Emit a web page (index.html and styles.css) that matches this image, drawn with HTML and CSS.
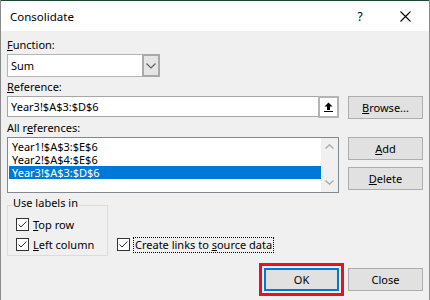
FILE: index.html
```html
<!DOCTYPE html>
<html lang="en">
	<head>
		<meta charset="UTF-8" />
		<title>Consolidate</title>
		<link rel="stylesheet" href="styles.css">
	</head>
	<body>
		<div class="window">
			<div class="titlebar">
				<span class="title">Consolidate</span>
				<span class="help">?</span>
				<span class="close-x">
					<svg width="11" height="11" viewBox="0 0 11 11"><path d="M0.5 0.5L10.5 10.5M10.5 0.5L0.5 10.5" stroke="#000" stroke-width="1.1" fill="none"/></svg>
				</span>
			</div>

			<div class="content">
				<div class="label"><u>F</u>unction:</div>
				<div class="combo">
					<span class="combo-value">Sum</span>
					<span class="combo-btn">
						<svg width="10" height="6" viewBox="0 0 10 6"><path d="M0.5 0.5L5 5L9.5 0.5" stroke="#606060" stroke-width="1.2" fill="none"/></svg>
					</span>
				</div>

				<div class="label label-gap"><u>R</u>eference:</div>
				<div class="grid-row">
					<div class="ref-input">
						<span class="ref-value">Year3!$A$3:$D$6</span>
						<span class="ref-btn">
							<svg width="9" height="10" viewBox="0 0 9 10"><path d="M4.5 0.5L0.5 4.5H3V8H6V4.5H8.5Z" fill="#000"/><rect x="0" y="9" width="9" height="1" fill="#000"/></svg>
						</span>
					</div>
					<button class="btn"><u>B</u>rowse...</button>
				</div>

				<div class="label label-gap2">All r<u>e</u>ferences:</div>
				<div class="grid-row">
					<div class="listbox">
						<ul class="list-items">
							<li>Year1!$A$3:$E$6</li>
							<li>Year2!$A$4:$E$6</li>
							<li class="selected">Year3!$A$3:$D$6</li>
						</ul>
						<div class="scrollbar">
							<svg width="9" height="5" viewBox="0 0 9 5"><path d="M0.5 4.5L4.5 0.8L8.5 4.5" stroke="#a8a8a8" stroke-width="1.3" fill="none"/></svg>
							<svg width="9" height="5" viewBox="0 0 9 5"><path d="M0.5 0.5L4.5 4.2L8.5 0.5" stroke="#a8a8a8" stroke-width="1.3" fill="none"/></svg>
						</div>
					</div>
					<div class="btn-stack">
						<button class="btn"><u>A</u>dd</button>
						<button class="btn"><u>D</u>elete</button>
					</div>
				</div>

				<div class="options-row">
					<fieldset class="group">
						<legend>Use labels in</legend>
						<div class="check-row">
							<span class="checkbox"><svg width="11" height="11" viewBox="0 0 11 11"><path d="M1.5 5.5L4 8L9.5 2.5" stroke="#333" stroke-width="1" fill="none"/></svg></span>
							<span><u>T</u>op row</span>
						</div>
						<div class="check-row">
							<span class="checkbox"><svg width="11" height="11" viewBox="0 0 11 11"><path d="M1.5 5.5L4 8L9.5 2.5" stroke="#333" stroke-width="1" fill="none"/></svg></span>
							<span><u>L</u>eft column</span>
						</div>
					</fieldset>
					<div class="check-row links-row">
						<span class="checkbox"><svg width="11" height="11" viewBox="0 0 11 11"><path d="M1.5 5.5L4 8L9.5 2.5" stroke="#333" stroke-width="1" fill="none"/></svg></span>
						<span class="focus-text">Create links to <u>s</u>ource data</span>
					</div>
				</div>

				<div class="footer">
					<button class="btn btn-default">OK</button>
					<button class="btn">Close</button>
				</div>
			</div>
		</div>
	</body>
</html>
```

FILE: styles.css
```css
* {
	box-sizing: border-box;
}
body {
	margin: 0;
	font-family: "Noto Sans", "Open Sans", sans-serif;
	font-size: 11px;
	color: #000;
}
.window {
	width: 430px;
	height: 300px;
	overflow: hidden;
	background-color: #f0f0f0;
	border-left: 1px solid #8a8a8a;
	border-right: 1px solid #8a8a8a;
}
.titlebar {
	height: 31px;
	margin: 0 -1px;
	background-color: #fff;
	border: 1px solid #1d4a2f;
	border-bottom: none;
	display: flex;
	align-items: center;
	padding-left: 9px;
}
.title {
	flex: 1;
	font-size: 11.5px;
}
.help {
	width: 46px;
	text-align: center;
	font-size: 12px;
}
.close-x {
	width: 46px;
	display: flex;
	justify-content: center;
	padding-right: 2px;
}
.content {
	padding: 7px 6px 0 6px;
}
.label {
	line-height: 14px;
	height: 14px;
}
.label-gap {
	margin-top: 3px;
}
.label-gap2 {
	margin-top: 2px;
}
.combo {
	margin-top: 2px;
	width: 153px;
	height: 23px;
	border: 1px solid #b4b4b4;
	background-color: #fff;
	display: flex;
}
.combo-value {
	flex: 1;
	padding-left: 3px;
	line-height: 21px;
}
.combo-btn {
	width: 18px;
	background-color: #e5e5e5;
	border: 2px solid #a9a9a9;
	margin: -1px -1px -1px 0;
	display: flex;
	align-items: center;
	justify-content: center;
}
.grid-row {
	margin-top: 2px;
	display: grid;
	grid-template-columns: 332px 75px;
	column-gap: 9px;
	align-items: start;
}
.ref-input {
	height: 21px;
	border: 1px solid #a6a6a6;
	background-color: #fff;
	display: flex;
}
.ref-value {
	flex: 1;
	padding-left: 3px;
	line-height: 19px;
}
.ref-btn {
	width: 21px;
	margin: -1px -1px -2px 0;
	border: 2px solid #b4b4b4;
	background-color: #fff;
	display: flex;
	align-items: center;
	justify-content: center;
}
.btn {
	display: block;
	width: 75px;
	height: 23px;
	padding: 0;
	font-family: inherit;
	font-size: 11px;
	color: #000;
	background-color: #e1e1e1;
	border: 1px solid #adadad;
}
.btn-stack {
	display: flex;
	flex-direction: column;
	gap: 7px;
}
.listbox {
	height: 56px;
	border: 1px solid #828790;
	background-color: #fff;
	display: flex;
}
.list-items {
	flex: 1;
	list-style: none;
	margin: 0;
	padding: 2px 0 0 1px;
}
.list-items li {
	height: 13px;
	line-height: 13px;
	padding-left: 3px;
}
.list-items .selected {
	background-color: #0078d7;
	color: #fff;
}
.scrollbar {
	width: 17px;
	background-color: #f0f0f0;
	display: flex;
	flex-direction: column;
	justify-content: space-between;
	align-items: center;
	padding: 6px 0 7px;
}
.options-row {
	margin-top: 3px;
	display: flex;
	align-items: flex-end;
}
.group {
	width: 101px;
	margin: 0;
	padding: 4px 0 4px 8px;
	border: 1px solid #dcdcdc;
	min-width: 0;
}
.group legend {
	padding: 0 1px 4px;
	margin-left: -4px;
	line-height: 14px;
}
.check-row {
	height: 13px;
	display: flex;
	align-items: center;
	gap: 4px;
	white-space: nowrap;
}
.check-row + .check-row {
	margin-top: 7px;
}
.checkbox {
	width: 13px;
	height: 13px;
	flex: none;
	border: 1px solid #333;
	background-color: #fff;
	display: flex;
	align-items: center;
	justify-content: center;
}
.links-row {
	margin: 0 0 5px 9px;
	gap: 3px;
}
.focus-text {
	border: 1px dotted #000;
	padding: 0 1px;
	line-height: 14px;
}
.footer {
	margin-top: 12px;
	display: flex;
	justify-content: flex-end;
	gap: 9px;
}
.btn-default {
	border: 2px solid #0078d7;
	outline: 3px solid #e81123;
	outline-offset: 2px;
}
```
